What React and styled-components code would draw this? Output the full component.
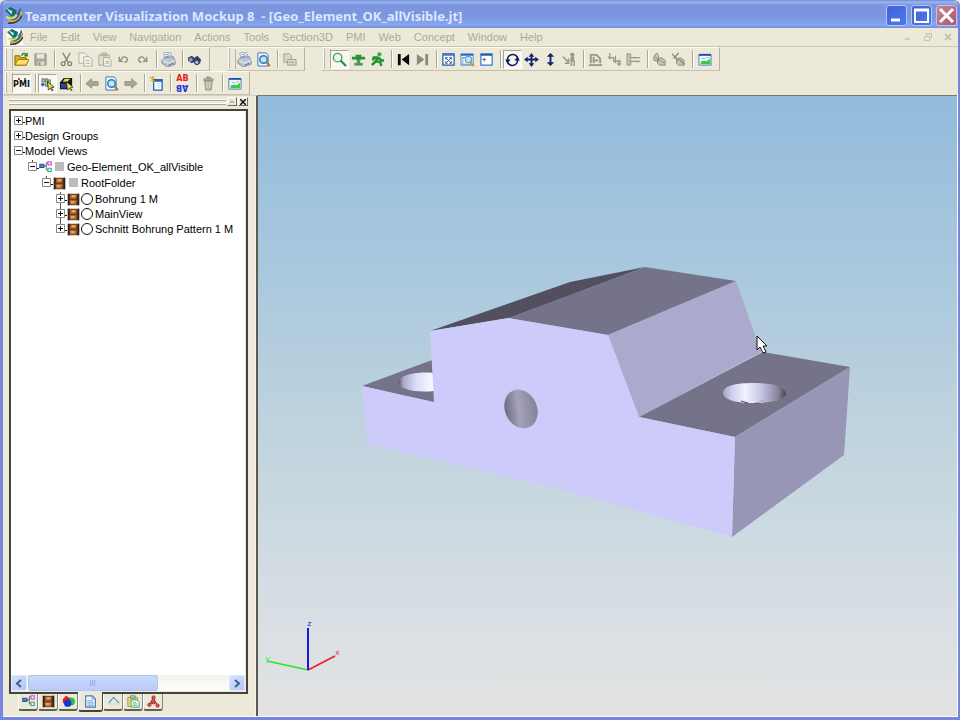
import React from "react";
import styled, { createGlobalStyle } from "styled-components";

const GlobalStyle = createGlobalStyle`
  * {
    box-sizing: border-box;
  }
  body {
    margin: 0;
    background: #ece9d8;
    font-family: "Liberation Sans", Arial, sans-serif;
  }
  button {
    padding: 0;
    border: 0;
    background: none;
    font: inherit;
    color: inherit;
  }
  svg {
    display: block;
  }
`;

const AppWindow = styled.div`
  height: 100vh;
  min-height: 480px;
  display: flex;
  flex-direction: column;
  background: #ece9d8;
  border: solid #7585e0;
  border-width: 0 2px 3px 3px;
  border-radius: 6px 6px 0 0;
  overflow: hidden;
`;

const TitleBar = styled.header`
  height: 28px;
  flex: none;
  display: flex;
  align-items: center;
  gap: 3px;
  padding: 3px 1px 0 2px;
  background: linear-gradient(#6f8ad6 0, #9db6f0 2px, #7b95de 5px, #7b96e0 17px, #86a6ee 25px, #7590da 28px);
`;

const Title = styled.h1`
  flex: 1;
  margin: 0;
  font: bold 13px "Noto Sans", sans-serif;
  color: #dde7ff;
  white-space: pre;
`;

const WindowButtons = styled.div`
  display: flex;
  gap: 4px;
`;

const WindowButton = styled.button`
  width: 21px;
  height: 21px;
  display: grid;
  place-items: center;
  border: 1px solid #b4c6f6;
  border-radius: 3px;
  background: ${(props) =>
    props.$close
      ? "linear-gradient(135deg, #c58793, #ae5468)"
      : "linear-gradient(135deg, #4263d6, #4a78ee)"};
`;

const MenuBar = styled.nav`
  height: 19px;
  flex: none;
  display: flex;
  align-items: center;
  padding: 0 5px 0 4px;
  border-bottom: 1px solid #c9c6b6;
`;

const MenuLogo = styled.span`
  background: #fff;
`;

const MenuList = styled.div`
  flex: 1;
  display: flex;
  gap: 13px;
  margin-left: 7px;
`;

const MenuItem = styled.button`
  font-size: 11px;
  line-height: 16px;
  color: #aca899;
`;

const DocButtons = styled.div`
  display: flex;
  gap: 10px;
`;

const DocButton = styled.button`
  width: 10px;
  height: 12px;
  display: grid;
  place-items: center;
`;

const ToolRow = styled.div`
  height: 24px;
  flex: none;
  display: flex;
  gap: 17px;
  padding-left: 1px;
`;

const ToolGroup = styled.div`
  display: flex;
  align-items: center;
  padding-right: 5px;
  border: solid;
  border-width: 1px 1px 1px 0;
  border-color: #fbfaf4 #b5b2a2 #c4c1b0 #fff;
`;

const Grip = styled.span`
  width: 8px;
  height: 20px;
  padding-left: 2px;
  &::before {
    content: "";
    display: block;
    width: 5px;
    height: 20px;
    border: solid;
    border-width: 0 1px;
    border-color: #b8b5a5;
    box-shadow: -1px 0 #fff;
  }
`;

const Divider = styled.span`
  width: 7px;
  height: 18px;
  &::before {
    content: "";
    display: block;
    width: 4px;
    height: 18px;
    border-right: 1px solid #aca899;
    box-shadow: 1px 0 #fff;
  }
`;

const ToolButton = styled.button`
  width: 19px;
  height: 19px;
  display: grid;
  place-items: center;
  ${(props) =>
    props.$pressed &&
    `
    background: #f8f7f1;
    border: 1px solid;
    border-color: #aca899 #fff #fff #aca899;
  `}
`;

const Workspace = styled.main`
  flex: 1;
  min-height: 0;
  display: flex;
  border: solid #fbfaf6;
  border-width: 0 1px 1px 0;
`;

const Sidebar = styled.aside`
  width: 255px;
  flex: none;
  display: flex;
  flex-direction: column;
  padding: 1px 8px 0 6px;
  border-top: 1px solid #d4d1c2;
  border-right: 2px solid #5c5b52;
  box-shadow: inset -1px 0 #f6f4ea;
`;

const DockHeader = styled.div`
  height: 9px;
  display: flex;
  gap: 1px;
  margin-bottom: 3px;
  flex: none;
`;

const DockGrip = styled.span`
  flex: 1;
  height: 8px;
  background: linear-gradient(#0000 2px, #fff 2px 3px, #aca899 3px 4px, #0000 4px 6px, #fff 6px 7px, #aca899 7px);
`;

const DockButton = styled.button`
  width: 10px;
  height: 9px;
  display: grid;
  place-items: center;
  border: 1px solid;
  border-color: #fff #716f64 #716f64 #fff;
`;

const TreePane = styled.section`
  flex: 1;
  min-height: 0;
  display: flex;
  flex-direction: column;
  padding: 0 1px 1px 0;
  border: 2px solid #45443b;
  background: #ece9d8;
`;

const Tree = styled.ul`
  flex: 1;
  min-height: 0;
  overflow: hidden;
  margin: 0;
  padding: 3px 0 0 3px;
  background: #fff;
  list-style: none;
`;

const Branch = styled.ul`
  margin: 0;
  padding: 1px 0 0 14px;
  list-style: none;
`;

const TreeLine = styled.div`
  height: 15px;
  display: flex;
  align-items: center;
  font-size: 11px;
  line-height: 15px;
  color: #000;
  white-space: nowrap;
`;

const Expander = styled.button`
  width: 11px;
  height: 15px;
  display: grid;
  align-items: center;
`;

const TreeIcon = styled.span`
  width: 14px;
  height: 14px;
`;

const NodeLabel = styled.label`
  display: flex;
  align-items: center;
`;

const LoadBox = styled.input.attrs({ type: "checkbox" })`
  appearance: none;
  width: 9px;
  height: 9px;
  margin: 0 3px 2px 2px;
  background: #bdbdbd;
`;

const ViewRadio = styled.input.attrs({ type: "radio", name: "view" })`
  appearance: none;
  width: 12px;
  height: 12px;
  margin: 0 2px 2px 0;
  border: 1px solid #111;
  border-radius: 50%;
`;

const ScrollBar = styled.div`
  height: 16px;
  flex: none;
  display: flex;
  background: linear-gradient(#f3f2ec, #fefefb);
`;

const ScrollButton = styled.button`
  width: 16px;
  display: grid;
  place-items: center;
  border: 1px solid #dfe8fd;
  border-radius: 2px;
  background: linear-gradient(135deg, #d3e0fe, #b4c8f6);
`;

const ScrollTrack = styled.div`
  flex: 1;
  padding: 0 1px;
  display: flex;
`;

const ScrollThumb = styled.div`
  width: 65%;
  display: grid;
  place-items: center;
  border: 1px solid #b0c3f2;
  border-radius: 2px;
  background: linear-gradient(#c9d8fd, #b9cbf8);
`;

const Tabs = styled.div`
  height: 22px;
  flex: none;
  display: flex;
  align-items: flex-start;
  padding-left: 9px;
`;

const Tab = styled.button`
  width: ${(props) => (props.$active ? "25px" : "20px")};
  height: ${(props) => (props.$active ? "20px" : "17px")};
  display: grid;
  place-items: center;
  background: #ece9d8;
  border: solid;
  border-width: 0 1px 2px;
  border-color: ${(props) =>
    props.$active ? "#fff #45443b #45443b #fff" : "#fff #8a887a #605f54 #fff"};
  border-radius: 0 0 3px 3px;
  ${(props) => props.$active && "margin-top: -2px;"}
`;

const Viewport = styled.section`
  flex: 1;
  min-width: 0;
  border-top: 1px solid #77766b;
  background: linear-gradient(#93bbdc, #a9c8de 28%, #c3d5de 58%, #d8dfe4 84%, #e3e3e2);
`;

const Scene = styled.svg`
  width: 100%;
  height: 100%;
`;

const AxisName = styled.text`
  font: 8px "Liberation Mono", monospace;
`;

const glyphs = {
  logo: (
    <>
      <path d="M0 3l5-3 6 3-1 5-4 1z" fill="#176b73" />
      <path d="M1 1l6 3-1 3z" fill="#b9ecd4" />
      <path d="M14 0c4 7-2 13-8 13l-5-4c6 2 12-2 13-9z" fill="#2367bd" />
      <path d="M15 4c1 7-5 11-12 9" fill="none" stroke="#e9a332" strokeWidth="2" />
      <path d="M1 9c3 3 8 2 10-2" fill="none" stroke="#d8e65b" strokeWidth="2" />
      <path d="M3 15c6 1 11-2 13-7" fill="none" stroke="#303d50" strokeWidth="1.5" />
    </>
  ),
  open: (
    <>
      <path d="M1 14V4h5l1 2h6v8z" fill="#d8ad22" stroke="#8b6b0b" />
      <path d="M1 14l3-6h12l-3 6z" fill="#ffdf5c" stroke="#9b780e" />
      <path d="M8 4c1-3 4-3 5-1m1-2v3h-3" fill="none" stroke="#29882e" strokeWidth="1.5" />
    </>
  ),
  save: (
    <>
      <path d="M2 2h12v12H2z" fill="#aaa89c" stroke="#99978b" />
      <path d="M4 2h8v5H4z" fill="#e9e6d9" />
      <path d="M5 10h7v4H5z" fill="#dedbcf" />
      <path d="M6 11h2v3H6z" fill="#8c897e" />
    </>
  ),
  cut: (
    <g fill="none" stroke="#858377" strokeWidth="1.4">
      <path d="M4 1l6 10M12 1L6 11" />
      <circle cx="4.5" cy="12.5" r="2" />
      <circle cx="11.5" cy="12.5" r="2" />
    </g>
  ),
  copy: (
    <g fill="#f3f1e7" stroke="#b2afa0">
      <path d="M1 1h6l3 3v8H1z" />
      <path d="M6 5h6l3 3v7H6zM8 9h4M8 12h5" />
    </g>
  ),
  paste: (
    <g fill="#e3e0d2" stroke="#aaa799">
      <path d="M2 3h11v11H2zM5 1h5v3H5z" />
      <path d="M7 6h5l3 3v6H7zM9 10h4M9 12h4" fill="#f5f3ea" />
    </g>
  ),
  undo: <path d="M3.500 5v5h4M4 10l3-4c2-2 5 0 5 2s-1 3-3 3" fill="none" stroke="#8f8c7f" strokeWidth="1.4" />,
  redo: <path d="M12.500 5v5h-4M12 10L9 6C7 4 4 6 4 8s1 3 3 3" fill="none" stroke="#8f8c7f" strokeWidth="1.4" />,
  print: (
    <>
      <path d="M4 7l-1-6 7-1 2 6z" fill="#fff" stroke="#97a4b4" />
      <path d="M5 3l4-1M5 5l5-1" stroke="#4f86c2" />
      <path d="M1 9l3-3 9-1 2 4v4l-8 3-6-4z" fill="#b9c5d1" stroke="#7d8893" />
      <path d="M2 9l6 3 7-3" fill="none" stroke="#edf3fa" />
      <path d="M8 14l5-2" stroke="#5076a1" />
    </>
  ),
  find: (
    <>
      <path d="M1 6l4-2 3 2 3-2 4 4-1 4-4 2-3-3-2 1-4-3z" fill="#39445c" />
      <circle cx="4" cy="8" r="2" fill="#8c9cc6" />
      <circle cx="10.5" cy="11" r="2.4" fill="#aab9e6" stroke="#1e2b62" />
    </>
  ),
  preview: (
    <>
      <path d="M2 1h9l2 3v11H2z" fill="#eff7ff" stroke="#3774c4" />
      <circle cx="8" cy="8" r="4" fill="#b8e6f8" stroke="#3576a4" strokeWidth="1.5" />
      <path d="M11 11l4 4" stroke="#b37331" strokeWidth="2" />
    </>
  ),
  send: (
    <g fill="#dbd8ca" stroke="#a19e90">
      <path d="M2 2h6l2 2v7H2z" />
      <path d="M6 8h9v6H6zM8 11h5" />
    </g>
  ),
  zoom: (
    <>
      <circle cx="6" cy="6" r="4.5" fill="#e5faee" stroke="#4aa162" strokeWidth="1.5" />
      <path d="M9 9l6 6" stroke="#238a3e" strokeWidth="2.2" />
    </>
  ),
  fly: (
    <>
      <path d="M1 5h14v3H1zM5 3h6v2H5z" fill="#28933c" />
      <path d="M6 7h4l-1 5h3v2H4v-2h3z" fill="#41ad4e" stroke="#176526" strokeWidth=".5" />
    </>
  ),
  run: (
    <>
      <circle cx="10" cy="2.5" r="2.3" fill="#39aa49" />
      <path d="M9 5l-3 5-4 4M7 10l4 1 1 4M8 6H4L3 9M9 6l3 3h3" fill="none" stroke="#239337" strokeWidth="2.7" />
    </>
  ),
  first: <path d="M2 2h3v12H2zM14 2v12L6 8z" fill="#080808" />,
  last: <path d="M11 2h3v12h-3zM2 2v12l8-6z" fill="#8c897e" />,
  fit: (
    <>
      <path d="M2 2h12v12H2z" fill="#f7fbff" stroke="#2458b4" strokeWidth="1.3" />
      <path d="M2 3h12" stroke="#3977df" strokeWidth="2" />
      <path d="M5 6l6 6M11 6l-6 6M5 8V6h2M9 6h2v2M5 10v2h2M9 12h2v-2" fill="none" stroke="#3b5495" />
    </>
  ),
  area: (
    <>
      <path d="M1 2h13v12H1z" fill="#f4faff" stroke="#4682cd" />
      <path d="M1 3h13" stroke="#2767cc" strokeWidth="2" />
      <path d="M3 6h9v7H3z" fill="none" stroke="#4a78b5" strokeDasharray="2 1" />
      <circle cx="9" cy="8" r="3.5" fill="#b9e8fa" stroke="#4a88b0" />
      <path d="M11 11l4 4" stroke="#cf9431" strokeWidth="2" />
    </>
  ),
  screen: (
    <>
      <path d="M2 2h12v12H2z" fill="#fff" stroke="#397bd3" strokeWidth="1.3" />
      <path d="M2 3h12" stroke="#2257b5" strokeWidth="2" />
      <path d="M5.500 6v4M3.500 8h4" stroke="#51658b" />
    </>
  ),
  rotate: (
    <g fill="#101c61" stroke="#101c61">
      <path d="M3 10c-2-8 8-10 11-3M13 7c2 8-8 10-11 3" fill="none" strokeWidth="1.7" />
      <path d="M0 8h6l-3 4zM10 9h6l-3-4z" stroke="none" />
    </g>
  ),
  pan: (
    <path d="M8 1l3 4H9v2h3V5l4 3-4 3V9H9v3h2l-3 4-3-4h2V9H4v2L0 8l4-3v2h3V5H5z" fill="#152569" />
  ),
  vertical: <path d="M8 1l4 4H9v6h3l-4 4-4-4h3V5H4z" fill="#152569" />,
  walk: (
    <>
      <circle cx="11" cy="3" r="2.3" fill="#99968a" />
      <path d="M11 5v5" stroke="#99968a" strokeWidth="4" />
      <path d="M10 9v6M13 9v6M1 5l6 6M7 7v5H3" fill="none" stroke="#99968a" strokeWidth="1.6" />
    </>
  ),
  machine: (
    <>
      <path d="M1 13h14v2H1z" fill="#99968a" />
      <path d="M3 12V3h6l4 4v5M6 12V5M3 3h7M6 9h5" fill="none" stroke="#9b988b" strokeWidth="2" />
    </>
  ),
  drop: <path d="M1 6h6v4h8M3 1v6l-2-2M9 4v7l-2-2m2 2l2-2M13 8v6l-2-2m2 2l2-2" fill="none" stroke="#99968a" strokeWidth="1.3" />,
  align: (
    <>
      <path d="M1 2h4v12H1z" fill="#c2bfb1" stroke="#99968a" />
      <path d="M5 6h10M5 10h10M9 5v2M12 9v2" stroke="#99968a" strokeWidth="1.4" />
    </>
  ),
  pickA: (
    <g fill="#c9c6b8" stroke="#898679">
      <path d="M2 9V5l3-4 2 3v6zM6 12V8l4-2 4 3v5H8z" />
      <path d="M9 9l4 3M3 5l5 4" />
    </g>
  ),
  pickB: (
    <g fill="#c9c6b8" stroke="#898679">
      <path d="M6 12V8l4-2 4 3v5H8z" />
      <path d="M1 2l7 7M8 1L3 7M9 8l5 5" strokeWidth="1.5" />
    </g>
  ),
  image: (
    <>
      <path d="M2 3h13v11H2z" fill="#eff8ff" stroke="#4c7fb9" />
      <path d="M2 3h13" stroke="#174bb0" strokeWidth="2" />
      <path d="M4 13v-3l4-1 2 1 4-3v6z" fill="#37c947" />
      <path d="M5 7h4M10 6h3" stroke="#9fb7cb" />
    </>
  ),
  filter: (
    <>
      <path d="M2 3h3v3H2zM6 3h2v8H6zM9 4h2v5H9z" fill="#d9d72e" stroke="#2246a4" strokeWidth=".7" />
      <path d="M1 9h4M3 7v4" stroke="#3769bd" strokeWidth="2" />
      <path d="M8 6l7 6-3 .4 2 3-1 .6-2-3-2 2z" fill="#e6df4a" stroke="#222" strokeWidth=".8" />
    </>
  ),
  pick: (
    <>
      <path d="M1 7l4-5h9v9l-4 3H1z" fill="#14171c" />
      <path d="M6 3h6l-3 3H4z" fill="#e2db45" />
      <path d="M2 8h6v5H2z" fill="#2744ad" />
      <path d="M8 6l7 6-3 .4 2 3-1 .6-2-3-2 2z" fill="#f0e561" stroke="#222" strokeWidth=".7" />
    </>
  ),
  back: <path d="M1 8l6-5v3h7v4H7v3z" fill="#aaa799" stroke="#949184" />,
  forward: <path d="M15 8L9 3v3H2v4h7v3z" fill="#aaa799" stroke="#949184" />,
  newView: (
    <>
      <path d="M5 4h9v11H5z" fill="#fafdff" stroke="#2460b5" strokeWidth="1.4" />
      <path d="M5 5h9" stroke="#2460b5" strokeWidth="2" />
      <path d="M8 8h4M8 10h4M8 12h4" stroke="#c6ddf3" />
      <path d="M1 1l5 5M6 1L2 5M4 0v6" stroke="#dfac28" strokeWidth="1.3" />
    </>
  ),
  trash: (
    <g fill="#bbb8aa" stroke="#96938a">
      <path d="M4 5h8l-1 10H5zM3 3h10v2H3zM6 1h4v2H6z" />
      <path d="M6.500 7v6M9.500 7v6" stroke="#dedbd0" />
    </g>
  ),
  nodes: (
    <g strokeWidth="1.3">
      <path d="M6 6h3M9 2v9M9 2h2M9 11h2" fill="none" stroke="#75727a" />
      <path d="M1 4h5v4H1z" fill="#4b88d0" stroke="#295492" />
      <path d="M11 1h4v4h-4z" fill="#fde8ff" stroke="#cb48ca" />
      <path d="M11 9h4v4h-4z" fill="#e0fff2" stroke="#28af79" />
    </g>
  ),
  views: (
    <>
      <path d="M1 1h14v14H1z" fill="#6b3b1e" />
      <path d="M1 1h2v14H1zM13 1h2v14h-2z" fill="#2b211d" />
      <path d="M4 2h8l-1 5H4zM3 9h9l-1 5H4z" fill="#b86c36" />
      <path d="M6 3h4v2H6zM5 10h4v2H5z" fill="#f1bd7d" />
    </>
  ),
  colors: (
    <>
      <circle cx="11" cy="8" r="5" fill="#20c63b" />
      <path d="M1 5l4-4 5 3v6H1z" fill="#e71f27" />
      <circle cx="7" cy="10" r="4.5" fill="#1536d4" />
    </>
  ),
  page: (
    <>
      <path d="M2 1h8l4 4v10H2z" fill="#edf6ff" stroke="#4778b7" strokeWidth="1.4" />
      <path d="M10 1v4h4M4 7h7M4 9h8M4 11h8M4 13h8" fill="none" stroke="#6d9ace" />
    </>
  ),
  angle: (
    <>
      <path d="M2 10l6-7 7 7" fill="none" stroke="#5799c8" strokeWidth="1.5" />
      <path d="M2 11h13" stroke="#b6d5ee" />
    </>
  ),
  clipboard: (
    <>
      <path d="M1 3h12v11H1z" fill="#ecd77b" stroke="#a08b35" />
      <path d="M4 1h6v3H4z" fill="#b5d6be" stroke="#528367" />
      <path d="M5 6h7l3 3v6H5z" fill="#effff4" stroke="#3a8c61" />
      <path d="M7 9h4M7 11h6M7 13h6" stroke="#5db180" />
    </>
  ),
  cluster: (
    <>
      <path d="M8 3L3 12M8 3l2 5 3 5M5 10h5" stroke="#9c2525" strokeWidth="1.3" />
      <g fill="#ec5b4c" stroke="#9c1b1b">
        <circle cx="8" cy="3" r="2" />
        <circle cx="3" cy="12" r="2" />
        <circle cx="8" cy="9" r="2" />
        <circle cx="13" cy="13" r="2" />
      </g>
    </>
  ),
};

const Icon = ({ name, size = 15 }) => (
  <svg width={size} height={size} viewBox="0 0 16 16" fill="none" aria-hidden="true">
    {glyphs[name]}
  </svg>
);

const PmiText = styled.span`
  font: bold 8px/9px "DejaVu Sans", sans-serif;
  color: #111;
  &::before {
    content: "";
    display: block;
    width: 12px;
    height: 2px;
    margin: 0 auto;
    background: linear-gradient(90deg, #0000 2px, #d93a32 2px 4px, #0000 4px 8px, #2f9a35 8px 10px, #0000 10px);
  }
`;

const SortText = styled.span`
  display: grid;
  font: bold 8px/9px "DejaVu Sans", sans-serif;
  color: #e81c1c;
  b {
    color: #2432dc;
    transform: rotate(180deg);
  }
`;

const menus = [
  "File", "Edit", "View", "Navigation", "Actions", "Tools",
  "Section3D", "PMI", "Web", "Concept", "Window", "Help",
];

// "|" starts a new block of buttons, "*" marks a pressed one
const topGroups = [
  "open save | cut copy paste undo redo | print | find",
  "print preview | send",
  "*zoom fly run | first last | fit area screen | *rotate pan vertical walk | machine drop align | pickA pickB | image",
];
const bottomGroups = [
  "*pmi | *filter pick | back preview forward | newView | sort | trash | image",
];

const ToolStrip = ({ items }) => (
  <ToolGroup>
    <Grip />
    {items.split(" ").map((item, i) => {
      if (item === "|") return <Divider key={i} />;
      const name = item.replace("*", "");
      return (
        <ToolButton key={i} $pressed={item !== name} aria-label={name}>
          {name === "pmi" && <PmiText>PMI</PmiText>}
          {name === "sort" && (
            <SortText>
              AB<b>AB</b>
            </SortText>
          )}
          {glyphs[name] && <Icon name={name} />}
        </ToolButton>
      );
    })}
  </ToolGroup>
);

const nodes = [
  { label: "PMI" },
  { label: "Design Groups" },
  {
    label: "Model Views",
    children: [
      {
        label: "Geo-Element_OK_allVisible",
        icon: "nodes",
        children: [
          {
            label: "RootFolder",
            icon: "views",
            children: [
              { label: "Bohrung 1 M", icon: "views", view: true },
              { label: "MainView", icon: "views", view: true },
              { label: "Schnitt Bohrung Pattern 1 M", icon: "views", view: true, last: true },
            ],
          },
        ],
      },
    ],
  },
];

const TreeNode = ({ node }) => (
  <li>
    <TreeLine>
      <Expander aria-label={"Toggle " + node.label}>
        <svg width="11" height="15" fill="none" stroke="#555">
          {node.icon && <path d="M4.500 0v3" />}
          {node.view && !node.last && <path d="M4.500 10v5" />}
          <path d="M.5 2.500h8v8h-8z" fill="#fff" stroke="#888" />
          <path d={node.children ? "M2 6.500h5M9 8.500h2" : "M2 6.500h5M4.500 4v5M9 8.500h2"} stroke="#111" />
        </svg>
      </Expander>
      {node.icon && (
        <TreeIcon>
          <Icon name={node.icon} size={13} />
        </TreeIcon>
      )}
      <NodeLabel>
        {node.icon && (node.view ? <ViewRadio /> : <LoadBox />)}
        {node.label}
      </NodeLabel>
    </TreeLine>
    {node.children && (
      <Branch>
        {node.children.map((child) => (
          <TreeNode key={child.label} node={child} />
        ))}
      </Branch>
    )}
  </li>
);

const Model = () => (
  <Scene viewBox="258 96 699 620" role="img" aria-label="Model">
    <defs>
      <linearGradient id="bore" x1="0" x2="1" y1=".1" y2=".5">
        <stop offset="0" stopColor="#605e6e" />
        <stop offset=".5" stopColor="#a5a3bb" />
        <stop offset="1" stopColor="#858396" />
      </linearGradient>
      <linearGradient id="holeRight">
        <stop offset="0" stopColor="#a6a4bf" />
        <stop offset=".15" stopColor="#d0cff0" />
        <stop offset=".35" stopColor="#f3f3ff" />
        <stop offset=".6" stopColor="#c8c6e7" />
        <stop offset=".88" stopColor="#84829a" />
        <stop offset="1" stopColor="#454350" />
      </linearGradient>
      <linearGradient id="holeLeft">
        <stop offset="0" stopColor="#555361" />
        <stop offset=".15" stopColor="#aaa8c2" />
        <stop offset=".5" stopColor="#dcdbfa" />
        <stop offset="1" stopColor="#fbfbff" />
      </linearGradient>
    </defs>
    <path d="M362 386L432 360L436 403z" fill="#757389" />
    <path d="M434 373C414 371 398 376 398 383C399 389 414 393 434 391z" fill="url(#holeLeft)" />
    <path d="M430 331L570 282L645 267L510 318z" fill="#524f5f" />
    <path d="M508 318L645 267L736 281L608 335z" fill="#757389" />
    <path d="M608 335L736 281L761 352L639 417z" fill="#aba9cd" />
    <path d="M639 417L763 352L850 367L735 437z" fill="#757389" />
    <path d="M735 437L850 367L844 455L732 537z" fill="#9896b6" />
    <path
      d="M430 331L508 318L608 335L639 417L735 437L732 537L555 488L367 444L362 386L434 402z"
      fill="#cccbfa"
    />
    <ellipse cx="521" cy="409" rx="16" ry="20" transform="rotate(-24 521 409)" fill="url(#bore)" />
    <path d="M723 393C723 386 735 383 753 383C772 383 785 386 786 394C784 400 772 403 753 403C736 403 724 400 723 393z" fill="url(#holeRight)" />
    <path d="M741 401l7 2M763 401l-8 2" fill="none" stroke="#494657" />
    <path d="M749 402h14" stroke="#f2f1ff" />
    <path d="M757 336v14l3-3 3 6 3-1-3-6h4z" fill="#fff" stroke="#111" />
    <path d="M308 670L267 661" stroke="#24e829" strokeWidth="1.5" />
    <path d="M308 670L335 656" stroke="#ed1d24" strokeWidth="1.5" />
    <path d="M308 670V628" stroke="#1616df" strokeWidth="2" />
    <AxisName x="265" y="661" fill="#24e829">y</AxisName>
    <AxisName x="335" y="655" fill="#ed1d24">x</AxisName>
    <AxisName x="307" y="626" fill="#1616df">z</AxisName>
  </Scene>
);

const App = () => {
  return (
    <>
      <GlobalStyle />
      <AppWindow>
        <TitleBar>
          <Icon name="logo" size={17} />
          <Title>{"Teamcenter Visualization Mockup 8  - [Geo_Element_OK_allVisible.jt]"}</Title>
          <WindowButtons>
            <WindowButton aria-label="Minimize">
              <svg width="17" height="17"><path d="M3 13h9" stroke="#fff" strokeWidth="3" /></svg>
            </WindowButton>
            <WindowButton aria-label="Maximize">
              <svg width="17" height="17" fill="none" stroke="#fff">
                <path d="M2 2v13h13V2" strokeWidth="2" />
                <path d="M1 3h15" strokeWidth="3" />
              </svg>
            </WindowButton>
            <WindowButton $close aria-label="Close">
              <svg width="17" height="17"><path d="M2 2l13 13M15 2L2 15" stroke="#fff" strokeWidth="3" /></svg>
            </WindowButton>
          </WindowButtons>
        </TitleBar>

        <MenuBar>
          <MenuLogo>
            <Icon name="logo" size={16} />
          </MenuLogo>
          <MenuList>
            {menus.map((menu) => (
              <MenuItem key={menu}>{menu}</MenuItem>
            ))}
          </MenuList>
          <DocButtons>
            <DocButton aria-label="Minimize document">
              <svg width="8" height="8"><path d="M1 6h5" stroke="#cfccbe" strokeWidth="2" /></svg>
            </DocButton>
            <DocButton aria-label="Restore document">
              <svg width="8" height="8" fill="none" stroke="#c6c3b5"><path d="M2.500 3V.5h5v4H6M.5 3.500h5v4h-5zM2 1h6" /></svg>
            </DocButton>
            <DocButton aria-label="Close document">
              <svg width="8" height="8"><path d="M1 1l6 6M7 1L1 7" stroke="#c6c3b5" strokeWidth="2" /></svg>
            </DocButton>
          </DocButtons>
        </MenuBar>

        <ToolRow>
          {topGroups.map((items) => (
            <ToolStrip key={items} items={items} />
          ))}
        </ToolRow>
        <ToolRow>
          {bottomGroups.map((items) => (
            <ToolStrip key={items} items={items} />
          ))}
        </ToolRow>

        <Workspace>
          <Sidebar>
            <DockHeader>
              <DockGrip />
              <DockButton aria-label="Collapse panel">
                <svg width="6" height="5"><path d="M1 4l2-2 2 2" fill="none" stroke="#8a887a" /></svg>
              </DockButton>
              <DockButton aria-label="Close panel">
                <svg width="6" height="6"><path d="M0 0l6 6M6 0L0 6" stroke="#111" strokeWidth="1.5" /></svg>
              </DockButton>
            </DockHeader>
            <TreePane>
              <Tree>
                {nodes.map((node) => (
                  <TreeNode key={node.label} node={node} />
                ))}
              </Tree>
              <ScrollBar>
                <ScrollButton aria-label="Scroll left">
                  <svg width="8" height="9"><path d="M6 1L2 4.500 6 8" fill="none" stroke="#425c8e" strokeWidth="2" /></svg>
                </ScrollButton>
                <ScrollTrack>
                  <ScrollThumb>
                    <svg width="8" height="6"><path d="M1.500 0v6M3.500 0v6M5.500 0v6" stroke="#93abe6" /></svg>
                  </ScrollThumb>
                </ScrollTrack>
                <ScrollButton aria-label="Scroll right">
                  <svg width="8" height="9"><path d="M2 1l4 3.500L2 8" fill="none" stroke="#425c8e" strokeWidth="2" /></svg>
                </ScrollButton>
              </ScrollBar>
            </TreePane>
            <Tabs>
              {["nodes", "views", "colors", "page", "angle", "clipboard", "cluster"].map((name) => (
                <Tab key={name} $active={name === "page"} aria-label={name}>
                  <Icon name={name} size={13} />
                </Tab>
              ))}
            </Tabs>
          </Sidebar>
          <Viewport>
            <Model />
          </Viewport>
        </Workspace>
      </AppWindow>
    </>
  );
};

export default App;
